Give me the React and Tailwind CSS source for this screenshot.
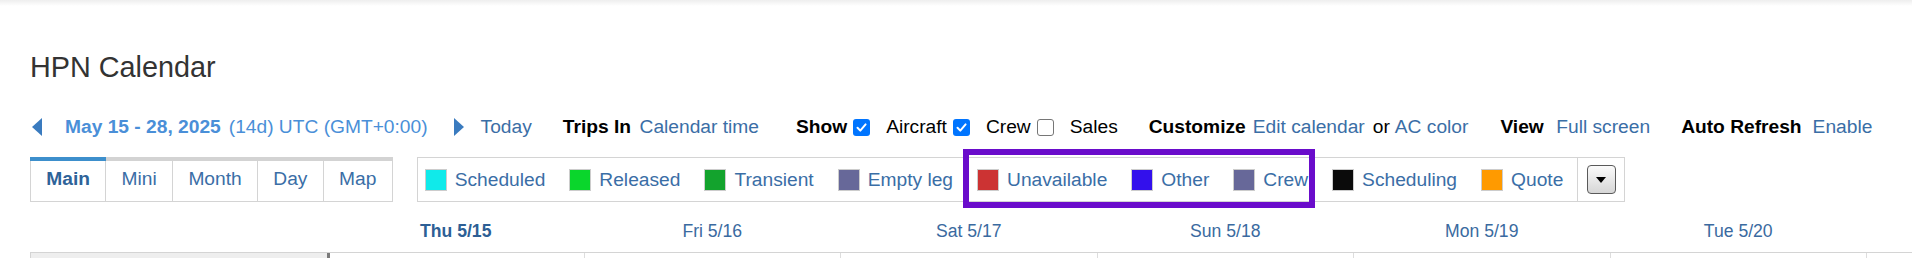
import React from "react";

const LINK = "text-[#3a6ea6]";

// little nav triangles
const ArrowLeft = () => (
  <svg width="10" height="18" viewBox="0 0 10 18" className="shrink-0">
    <polygon points="10,0 0,9 10,18" fill="#3a7bbf" />
  </svg>
);

const ArrowRight = () => (
  <svg width="10" height="18" viewBox="0 0 10 18" className="shrink-0">
    <polygon points="0,0 10,9 0,18" fill="#3a7bbf" />
  </svg>
);

const Check = ({ checked, className = "" }) =>
  checked ? (
    <span className={`w-[17px] h-[17px] rounded-[3px] bg-[#0075ff] flex items-center justify-center shrink-0 ${className}`}>
      <svg width="13" height="13" viewBox="0 0 13 13">
        <path d="M2.5 6.8 L5.3 9.6 L10.6 3.4" fill="none" stroke="#fff" strokeWidth="2" strokeLinecap="round" strokeLinejoin="round" />
      </svg>
    </span>
  ) : (
    <span className={`w-[17px] h-[17px] rounded-[3px] bg-white border border-[#767676] shrink-0 ${className}`} />
  );

const tabs = ["Main", "Mini", "Month", "Day", "Map"];

const legend = [
  { label: "Scheduled", color: "bg-[#10eaea]" },
  { label: "Released", color: "bg-[#0ad62c]" },
  { label: "Transient", color: "bg-[#13a32d]" },
  { label: "Empty leg", color: "bg-[#676899]" },
  { label: "Unavailable", color: "bg-[#cc3333]" },
  { label: "Other", color: "bg-[#3310ec]" },
  { label: "Crew", color: "bg-[#676899]" },
  { label: "Scheduling", color: "bg-[#0b0b0b]" },
  { label: "Quote", color: "bg-[#ff9a00]" },
];

const days = ["Thu 5/15", "Fri 5/16", "Sat 5/17", "Sun 5/18", "Mon 5/19", "Tue 5/20"];

export default function App() {
  return (
    <div className="relative w-[1912px] h-[258px] overflow-hidden bg-white font-['Liberation_Sans',Arial,sans-serif]">
      <div className="h-[6px] bg-linear-to-b from-[#eeeeee] to-white" />

      <div className="pl-[30px]">
        {/* TITLE */}
        <h1 className="mt-[45px] text-[28.8px] leading-[33px] text-[#333333] font-normal">HPN Calendar</h1>

        {/* TOOLBAR */}
        <div className="mt-[31px] h-[24px] flex items-center text-[19.2px] leading-[24px] whitespace-nowrap text-black">
          <span className="ml-[2px]"><ArrowLeft /></span>
          <span className="ml-[23px] font-bold text-[#4a8fd8]">May 15 - 28, 2025</span>
          <span className="ml-[8px] text-[#4a8fd8]">(14d) UTC (GMT+0:00)</span>
          <span className="ml-[26px]"><ArrowRight /></span>
          <span className={`ml-[17px] ${LINK}`}>Today</span>

          <span className="ml-[31px] font-bold">Trips In</span>
          <span className={`ml-[8.5px] ${LINK}`}>Calendar time</span>

          <span className="ml-[37px] font-bold">Show</span>
          <Check checked className="ml-[6px]" />
          <span className="ml-[16px]">Aircraft</span>
          <Check checked className="ml-[6px]" />
          <span className="ml-[16px]">Crew</span>
          <Check checked={false} className="ml-[6px]" />
          <span className="ml-[16px]">Sales</span>

          <span className="ml-[31px] font-bold">Customize</span>
          <span className={`ml-[7px] ${LINK}`}>Edit calendar</span>
          <span className="ml-[8px]">or</span>
          <span className={`ml-[5px] ${LINK}`}>AC color</span>

          <span className="ml-[32px] font-bold">View</span>
          <span className={`ml-[12.5px] ${LINK}`}>Full screen</span>

          <span className="ml-[31px] font-bold">Auto Refresh</span>
          <span className={`ml-[11px] ${LINK}`}>Enable</span>
        </div>

        {/* TABS + LEGEND */}
        <div className="mt-[18px] flex items-start text-[19.2px] whitespace-nowrap">
          <div className="flex">
            {tabs.map((t, i) => (
              <div key={t} className="flex flex-col">
                <div className={`h-[4px] ${i === 0 ? "bg-[#3d8fcc]" : "bg-[#d3d3d3]"}`} />
                <div
                  className={`px-[15.3px] pt-[6px] pb-[10px] leading-[24px] border-r border-b border-[#d4d4d4] ${
                    i === 0 ? "border-l font-bold text-[#2e6399]" : "text-[#3a6ea6]"
                  }`}
                >
                  {t}
                </div>
              </div>
            ))}
          </div>

          <div className="ml-[24px] h-[45px] flex items-center gap-[24px] pl-[7px] pr-[14px] border border-[#d4d4d4] leading-[24px]">
            {legend.map((l) => (
              <div key={l.label} className="flex items-center gap-[8px]">
                <span className={`w-[22px] h-[22px] border border-[#cccccc] ${l.color}`} />
                <span className="text-[#3a6ea6]">{l.label}</span>
              </div>
            ))}
          </div>

          <div className="w-[47px] h-[45px] flex items-center justify-center border-y border-r border-[#d4d4d4]">
            <div className="w-[29px] h-[29px] rounded-[4px] border border-[#5a5a5a] bg-linear-to-b from-[#fbfbfb] to-[#d6d6d6] flex items-center justify-center">
              <svg width="10" height="6" viewBox="0 0 10 6">
                <polygon points="0,0 10,0 5,6" fill="#000" />
              </svg>
            </div>
          </div>
        </div>

        {/* DAY HEADERS */}
        <div className="flex h-[50px] text-[17.6px] leading-[22px] whitespace-nowrap">
          <div className="w-[297.5px] shrink-0" />
          {days.map((d, i) => (
            <div
              key={d}
              className={`w-[256.5px] shrink-0 text-center pt-[18px] ${
                i === 0 ? "font-bold text-[#2d5f95]" : "text-[#3a6aa0]"
              }`}
            >
              {d}
            </div>
          ))}
        </div>

        {/* GRID TOP ROW */}
        <div className="flex h-[20px] border-t border-[#d4d4d4]">
          <div className="w-[296.5px] shrink-0 bg-[#eeeeee] border-l border-[#d4d4d4]" />
          <div className="w-[3px] shrink-0 bg-[#7a7a7a]" />
          <div className="w-[255px] shrink-0 border-r border-[#dddddd]" />
          {[1, 2, 3, 4, 5, 6].map((n) => (
            <div key={n} className="w-[256.5px] shrink-0 border-r border-[#dddddd]" />
          ))}
        </div>
      </div>

      {/* annotation highlight */}
      <div className="absolute left-[963px] top-[149px] w-[352px] h-[59px] border-[6px] border-[#6a0ccb] pointer-events-none" />
    </div>
  );
}
